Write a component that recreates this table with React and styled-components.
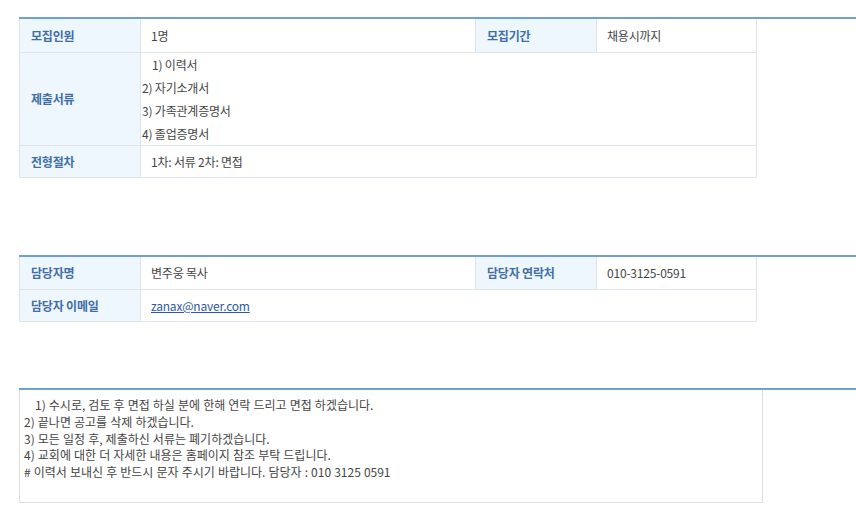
import React from "react";
import styled, { createGlobalStyle } from "styled-components";

const Global = createGlobalStyle`
  html, body { margin: 0; padding: 0; background: #fff; }
  body { font-family: "Noto Sans CJK KR", "Noto Sans", sans-serif; color: #444; }
`;

const Page = styled.div`
  padding: 17px 0 20px 19px;
  display: flex;
  flex-direction: column;
`;

const Section = styled.section`
  border-top: 2px solid #6f9fd6;
  margin-top: ${(p) => p.$gap || 0}px;
`;

const Table = styled.table`
  width: 737px;
  border-collapse: collapse;
  table-layout: fixed;
  font-size: 12px;
  letter-spacing: -0.2px;
`;

const Label = styled.th`
  box-sizing: border-box;
  background: #eef6fe;
  color: #3f6ea6;
  font-weight: 700;
  text-align: left;
  padding: 0 0 0 11px;
  height: ${(p) => p.$h || 33}px;
  border: 1px solid #dde3ea;
  border-top: none;
`;

const Value = styled.td`
  box-sizing: border-box;
  padding: 0 0 0 10px;
  height: ${(p) => p.$h || 33}px;
  color: #444;
  border: 1px solid #dde3ea;
  border-top: none;
  line-height: ${(p) => (p.$multi ? "23px" : "normal")};
  ${(p) => p.$multi && "padding: 0 0 0 1px;"}
`;

const Indent = styled.span`
  display: inline-block;
  width: 10px;
`;

const MailLink = styled.a`
  color: #2a5aa8;
  text-decoration: underline;
`;

const NoteBox = styled.div`
  width: 744px;
  box-sizing: border-box;
  height: 113px;
  border: 1px solid #dcdcdc;
  border-top: none;
  padding: 7px 4px;
  font-size: 12px;
  letter-spacing: 0;
  word-spacing: 0.4px;
  line-height: 16.8px;
  color: #444;
`;

const NoteIndent = styled.span`
  display: inline-block;
  width: 11px;
`;

const Cols = () => (
  <colgroup>
    <col style={{ width: 121 }} />
    <col style={{ width: 335 }} />
    <col style={{ width: 121 }} />
    <col style={{ width: 160 }} />
  </colgroup>
);

export default function App() {
  return (
    <>
      <Global />
      <Page>
        <Section>
          <Table>
            <Cols />
            <tbody>
              <tr>
                <Label>모집인원</Label>
                <Value>1명</Value>
                <Label>모집기간</Label>
                <Value>채용시까지</Value>
              </tr>
              <tr>
                <Label $h={93}>제출서류</Label>
                <Value colSpan={3} $multi $h={93}>
                  <Indent />1) 이력서
                  <br />
                  2) 자기소개서
                  <br />
                  3) 가족관계증명서
                  <br />
                  4) 졸업증명서
                </Value>
              </tr>
              <tr>
                <Label $h={32}>전형절차</Label>
                <Value colSpan={3} $h={32}>1차: 서류 2차: 면접</Value>
              </tr>
            </tbody>
          </Table>
        </Section>

        <Section $gap={77}>
          <Table>
            <Cols />
            <tbody>
              <tr>
                <Label>담당자명</Label>
                <Value>변주웅 목사</Value>
                <Label>담당자 연락처</Label>
                <Value>010-3125-0591</Value>
              </tr>
              <tr>
                <Label $h={32}>담당자 이메일</Label>
                <Value colSpan={3} $h={32}>
                  <MailLink href="mailto:zanax@naver.com">zanax@naver.com</MailLink>
                </Value>
              </tr>
            </tbody>
          </Table>
        </Section>

        <Section $gap={66}>
          <NoteBox>
            <NoteIndent />1) 수시로, 검토 후 면접 하실 분에 한해 연락 드리고 면접 하겠습니다.
            <br />
            2) 끝나면 공고를 삭제 하겠습니다.
            <br />
            3) 모든 일정 후, 제출하신 서류는 폐기하겠습니다.
            <br />
            4) 교회에 대한 더 자세한 내용은 홈페이지 참조 부탁 드립니다.
            <br /># 이력서 보내신 후 반드시 문자 주시기 바랍니다. 담당자 : 010 3125 0591
          </NoteBox>
        </Section>
      </Page>
    </>
  );
}
